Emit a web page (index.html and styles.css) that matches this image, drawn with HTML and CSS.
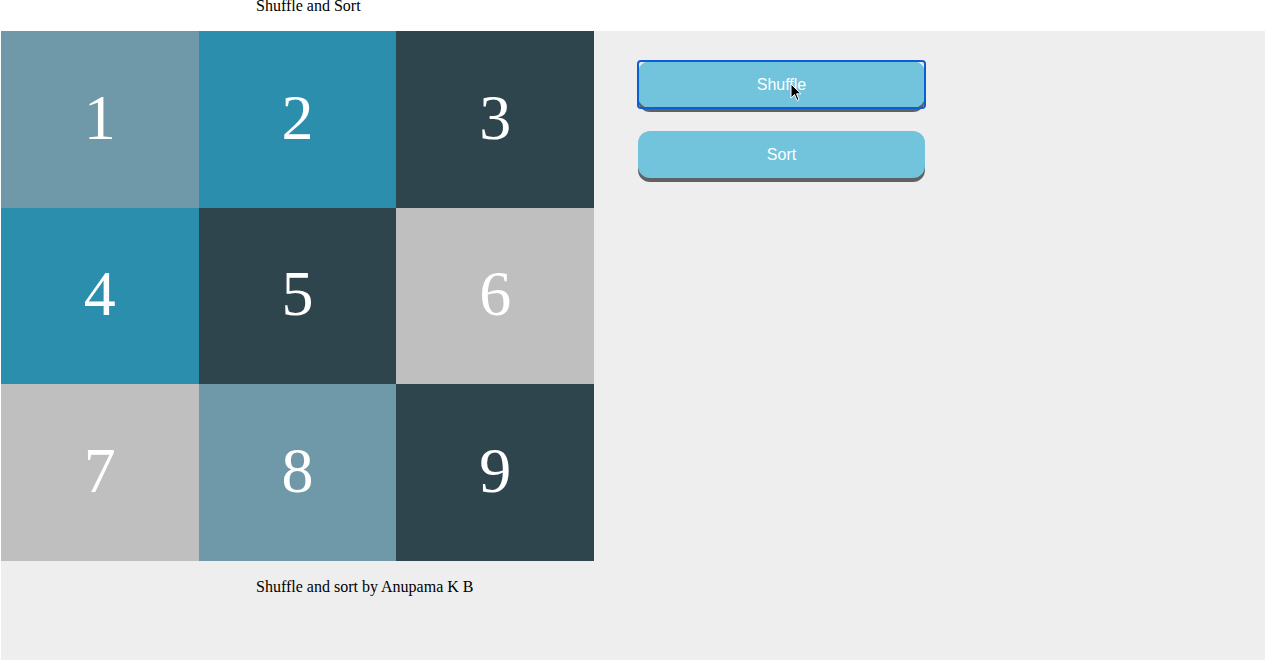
FILE: index.html
```html
<!DOCTYPE html>
<html>
<head>
<meta charset="utf-8">
<title>Shuffle and Sort</title>
<link rel="stylesheet" href="styles.css">
</head>
<body>
<header class="top">Shuffle and Sort</header>
<main class="stage">
  <section class="board">
    <div class="grid">
      <div class="tile c1">1</div>
      <div class="tile c2">2</div>
      <div class="tile c3">3</div>
      <div class="tile c2">4</div>
      <div class="tile c3">5</div>
      <div class="tile c4">6</div>
      <div class="tile c4">7</div>
      <div class="tile c1">8</div>
      <div class="tile c3">9</div>
    </div>
    <p class="credit">Shuffle and sort by Anupama K B</p>
  </section>
  <section class="controls">
    <div class="focus-wrap">
      <button class="btn">Shuffle</button>
      <svg class="cursor" width="12" height="19" viewBox="0 0 12 19"><path d="M1 1 L1 15 L4.5 11.5 L7 17.5 L9 16.6 L6.6 10.8 L11 10.8 Z" fill="#000" stroke="#fff" stroke-width="1"/></svg>
    </div>
    <button class="btn">Sort</button>
  </section>
</main>
</body>
</html>
```
FILE: styles.css
```css
html, body {
  margin: 0;
  padding: 0;
  background: #ffffff;
  height: 100%;
}
body {
  font-family: "Liberation Serif", "Times New Roman", serif;
  font-size: 16px;
  color: #000;
  display: flex;
  flex-direction: column;
}
.top {
  height: 31px;
  line-height: 12px;
  padding-left: 256px;
  box-sizing: border-box;
}
.stage {
  flex: 1;
  margin-left: 1px;
  background: #eeeeee;
  display: flex;
  align-items: flex-start;
}
.board {
  width: 593px;
}
.grid {
  display: grid;
  grid-template-columns: repeat(3, 1fr);
  grid-template-rows: repeat(3, 1fr);
  height: 530px;
}
.tile {
  display: flex;
  align-items: center;
  justify-content: center;
  color: #ffffff;
  font-size: 64px;
  padding-bottom: 3px;
  box-sizing: border-box;
}
.c1 { background: #6f98a8; }
.c2 { background: #2b8ead; }
.c3 { background: #2f454e; }
.c4 { background: #bfbfbf; }
.credit {
  margin: 17px 0 0;
  padding-left: 255px;
  line-height: 18px;
}
.controls {
  margin-left: 44px;
  padding-top: 30px;
  display: flex;
  flex-direction: column;
  gap: 23px;
  width: 287px;
}
.focus-wrap {
  position: relative;
  outline: 2px solid #0b5fd6;
  outline-offset: -1px;
  border-radius: 3px;
  height: 47px;
}
.btn {
  display: block;
  width: 287px;
  height: 47px;
  margin: 0;
  padding: 0;
  border: none;
  border-radius: 12px;
  background: #72c3dc;
  color: #ffffff;
  font-family: "Liberation Sans", Arial, sans-serif;
  font-size: 16px;
  box-shadow: 0 4px 0 #5f6163;
  cursor: pointer;
}
.cursor {
  position: absolute;
  left: 152px;
  top: 22px;
}
```
